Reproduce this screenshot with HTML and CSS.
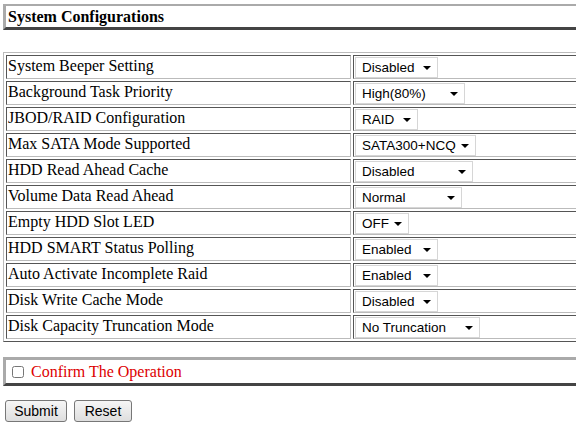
FILE: index.html
```html
<!DOCTYPE html>
<html lang="en">

    <head>
        <meta charset="UTF-8">
        <title>System Configurations</title>
        <link rel="stylesheet" href="styles.css">
    </head>

    <body>
        <form>
            <table class="heading">
                <tr>
                    <td>System Configurations</td>
                </tr>
            </table>

            <table class="settings">
                <tr>
                    <td class="name">System Beeper Setting</td>
                    <td><span class="pick"><select class="w83"><option>Disabled</option><option>Enabled</option></select></span></td>
                </tr>
                <tr>
                    <td class="name">Background Task Priority</td>
                    <td><span class="pick"><select class="w110"><option>High(80%)</option><option>Medium(50%)</option><option>Low(25%)</option></select></span></td>
                </tr>
                <tr>
                    <td class="name">JBOD/RAID Configuration</td>
                    <td><span class="pick"><select class="w63"><option>RAID</option><option>JBOD</option></select></span></td>
                </tr>
                <tr>
                    <td class="name">Max SATA Mode Supported</td>
                    <td><span class="pick"><select class="w121"><option>SATA300+NCQ</option><option>SATA150</option></select></span></td>
                </tr>
                <tr>
                    <td class="name">HDD Read Ahead Cache</td>
                    <td><span class="pick"><select class="w118"><option>Disabled</option><option>Enabled</option></select></span></td>
                </tr>
                <tr>
                    <td class="name">Volume Data Read Ahead</td>
                    <td><span class="pick"><select class="w107"><option>Normal</option><option>Aggressive</option></select></span></td>
                </tr>
                <tr>
                    <td class="name">Empty HDD Slot LED</td>
                    <td><span class="pick"><select class="w54"><option>OFF</option><option>ON</option></select></span></td>
                </tr>
                <tr>
                    <td class="name">HDD SMART Status Polling</td>
                    <td><span class="pick"><select class="w83"><option>Enabled</option><option>Disabled</option></select></span></td>
                </tr>
                <tr>
                    <td class="name">Auto Activate Incomplete Raid</td>
                    <td><span class="pick"><select class="w83"><option>Enabled</option><option>Disabled</option></select></span></td>
                </tr>
                <tr>
                    <td class="name">Disk Write Cache Mode</td>
                    <td><span class="pick"><select class="w83"><option>Disabled</option><option>Enabled</option></select></span></td>
                </tr>
                <tr>
                    <td class="name">Disk Capacity Truncation Mode</td>
                    <td><span class="pick"><select class="w125"><option>No Truncation</option><option>Multiples Of 10G</option></select></span></td>
                </tr>
            </table>

            <table class="confirm">
                <tr>
                    <td><input type="checkbox" id="confirm"><label for="confirm">Confirm The Operation</label></td>
                </tr>
            </table>

            <div class="actions">
                <button type="button" class="w62">Submit</button>
                <button type="reset" class="w58">Reset</button>
            </div>
        </form>
    </body>

</html>
```

FILE: styles.css
```css
html {
    overflow: hidden;
}

body {
    font-family: "Liberation Serif", "Times New Roman", serif;
    font-size: 16px;
    background-color: #fff;
    color: #000;
    margin: 4px 3px;
}

table {
    width: 640px;
    border-collapse: separate;
}

.heading {
    border-style: solid;
    border-width: 2px 3px 3px 3px;
    border-color: #aaa #444 #444 #aaa;
    border-spacing: 0;
}

.heading td {
    font-weight: bold;
    height: 21px;
    padding: 0 2px 0 2px;
}

.settings {
    margin-top: 22px;
    border: 1px solid;
    border-color: #bbb #555 #555 #bbb;
    border-spacing: 2px;
}

.settings td {
    height: 22px;
    padding: 0 1px;
    border: 1px solid;
    border-color: #555 #bbb #bbb #555;
    vertical-align: middle;
}

.settings .name {
    width: 341px;
    padding-bottom: 2px;
    height: 20px;
}

.pick {
    position: relative;
    display: inline-block;
    vertical-align: middle;
}

.pick::after {
    content: "";
    position: absolute;
    right: 7px;
    top: 9px;
    border-left: 4px solid transparent;
    border-right: 4px solid transparent;
    border-top: 4px solid #000;
    pointer-events: none;
}

select {
    appearance: none;
    -webkit-appearance: none;
    font-family: Arial, "Liberation Sans", sans-serif;
    font-size: 13.5px;
    height: 21px;
    padding: 0 0 0 6px;
    margin: 0;
    border: 1px solid #d6d6d6;
    border-radius: 0;
    background-color: #fff;
    color: #000;
    display: block;
}

.w54 { width: 54px; }
.w63 { width: 63px; }
.w83 { width: 83px; }
.w107 { width: 107px; }
.w110 { width: 110px; }
.w118 { width: 118px; }
.w121 { width: 121px; }
.w125 { width: 125px; }

.confirm {
    margin-top: 15px;
    border-style: solid;
    border-width: 3px;
    border-color: #aaa #444 #444 #aaa;
    border-spacing: 0;
}

.confirm td {
    height: 23px;
    padding: 0 2px;
    color: #d00;
}

.confirm input {
    width: 12px;
    height: 12px;
    margin: 0 7px 0 4px;
    vertical-align: -1px;
    accent-color: #888;
}

.actions {
    margin-top: 14px;
    display: flex;
    gap: 7px;
    padding-left: 2px;
}

button {
    font-family: Arial, "Liberation Sans", sans-serif;
    font-size: 14px;
    height: 22px;
    padding: 0;
    color: #000;
    border: 1px solid #777;
    border-radius: 3px;
    background: linear-gradient(#f6f6f6, #dedede);
}

.w62 { width: 62px; }
.w58 { width: 58px; }
```
